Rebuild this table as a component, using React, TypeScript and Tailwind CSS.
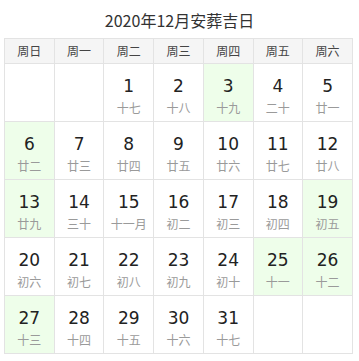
const WEEK = ['周日', '周一', '周二', '周三', '周四', '周五', '周六'];

type Day = { d: number; lunar: string; good?: boolean } | null;

// December 2020: starts on Tuesday
const DAYS: Day[] = [
  null,
  null,
  { d: 1, lunar: '十七' },
  { d: 2, lunar: '十八' },
  { d: 3, lunar: '十九', good: true },
  { d: 4, lunar: '二十' },
  { d: 5, lunar: '廿一' },
  { d: 6, lunar: '廿二', good: true },
  { d: 7, lunar: '廿三' },
  { d: 8, lunar: '廿四' },
  { d: 9, lunar: '廿五' },
  { d: 10, lunar: '廿六' },
  { d: 11, lunar: '廿七' },
  { d: 12, lunar: '廿八' },
  { d: 13, lunar: '廿九', good: true },
  { d: 14, lunar: '三十' },
  { d: 15, lunar: '十一月' },
  { d: 16, lunar: '初二' },
  { d: 17, lunar: '初三' },
  { d: 18, lunar: '初四' },
  { d: 19, lunar: '初五', good: true },
  { d: 20, lunar: '初六' },
  { d: 21, lunar: '初七' },
  { d: 22, lunar: '初八' },
  { d: 23, lunar: '初九' },
  { d: 24, lunar: '初十' },
  { d: 25, lunar: '十一', good: true },
  { d: 26, lunar: '十二', good: true },
  { d: 27, lunar: '十三', good: true },
  { d: 28, lunar: '十四' },
  { d: 29, lunar: '十五' },
  { d: 30, lunar: '十六' },
  { d: 31, lunar: '十七' },
  null,
  null,
];

const weeks: Day[][] = [];
for (let i = 0; i < DAYS.length; i += 7) weeks.push(DAYS.slice(i, i + 7));

export default function App() {
  return (
    <div className="w-[359px] h-[361px] bg-white font-['Noto_Sans_CJK_SC',sans-serif] text-[#333]">
      <div className="h-[38px] flex items-center justify-center text-[16px] pt-[1px]">2020年12月安葬吉日</div>
      <table className="ml-[4px] w-[349px] table-fixed border-collapse">
        <thead>
          <tr className="h-[25px] bg-[#f5f5f5]">
            {WEEK.map((w) => (
              <th key={w} className="border border-[#e3e3e3] text-[12px] font-normal text-[#444] p-0">
                {w}
              </th>
            ))}
          </tr>
        </thead>
        <tbody>
          {weeks.map((row, ri) => (
            <tr key={ri} className="h-[58px]">
              {row.map((c, ci) => (
                <td
                  key={ci}
                  className={`border border-[#e3e3e3] p-0 text-center align-top ${c?.good ? 'bg-[#eefeea]' : ''}`}
                >
                  {c && (
                    <div className="flex flex-col items-center pt-[12px]">
                      <span className="font-['DejaVu_Sans',sans-serif] text-[17px] leading-[20px] text-[#222]">{c.d}</span>
                      <span className="text-[12px] leading-[16px] mt-[4px] text-[#9a9a9a]">{c.lunar}</span>
                    </div>
                  )}
                </td>
              ))}
            </tr>
          ))}
        </tbody>
      </table>
    </div>
  );
}
